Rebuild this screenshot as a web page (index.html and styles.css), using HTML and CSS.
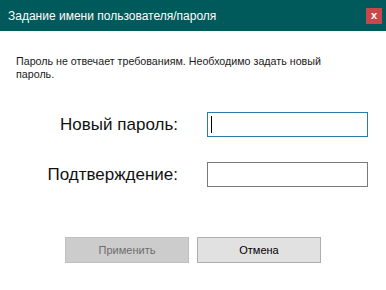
FILE: index.html
```html
<!DOCTYPE html>
<html lang="ru">
<head>
<meta charset="utf-8">
<link rel="stylesheet" href="styles.css">
</head>
<body>
<div class="window">
  <div class="titlebar">
    <span class="title">Задание имени пользователя/пароля</span>
    <span class="close">x</span>
  </div>
  <div class="content">
    <p class="message">Пароль не отвечает требованиям. Необходимо задать новый пароль.</p>
    <div class="form">
      <label class="label">Новый пароль:</label>
      <div class="input focused"><span class="caret"></span></div>
      <label class="label">Подтверждение:</label>
      <div class="input"></div>
    </div>
    <div class="buttons">
      <div class="btn disabled">Применить</div>
      <div class="btn">Отмена</div>
    </div>
  </div>
</div>
</body>
</html>
```
FILE: styles.css
```css
html, body {
  margin: 0;
  padding: 0;
  background: #ffffff;
}
.window {
  width: 386px;
  height: 290px;
  background: #ffffff;
  display: flex;
  flex-direction: column;
}
.titlebar {
  height: 31px;
  background: #00595a;
  display: flex;
  align-items: center;
  justify-content: space-between;
  padding-left: 8px;
  padding-right: 4px;
  box-sizing: border-box;
}
.title {
  font-family: "Liberation Sans", sans-serif;
  font-size: 12px;
  color: #ffffff;
}
.close {
  width: 16px;
  height: 16px;
  background: #c8474b;
  color: #ffffff;
  font-family: "Liberation Sans", sans-serif;
  font-size: 11px;
  font-weight: bold;
  display: flex;
  align-items: center;
  justify-content: center;
  line-height: 1;
  padding-bottom: 1px;
  box-sizing: border-box;
}
.content {
  padding: 24px 16px 0 16px;
}
.message {
  margin: 0;
  width: 325px;
  font-family: "Liberation Sans", sans-serif;
  font-size: 10.7px;
  line-height: 13px;
  color: #1a1a1a;
}
.form {
  margin-top: 31px;
  display: grid;
  grid-template-columns: 162px 161px;
  column-gap: 29px;
  row-gap: 25px;
}
.label {
  font-family: "Liberation Sans", sans-serif;
  font-size: 17px;
  color: #111111;
  text-align: right;
  align-self: center;
  padding-top: 1px;
}
.input {
  height: 25px;
  box-sizing: border-box;
  border: 1px solid #7a7a7a;
  background: #ffffff;
  display: flex;
  align-items: center;
  padding-left: 3px;
}
.input.focused {
  border-color: #2f7aa6;
}
.caret {
  width: 1px;
  height: 17px;
  background: #000000;
}
.buttons {
  margin-top: 50px;
  display: flex;
  justify-content: center;
  gap: 8px;
}
.btn {
  width: 124px;
  height: 26px;
  box-sizing: border-box;
  border: 1px solid #adadad;
  background: #e1e1e1;
  font-family: "Liberation Sans", sans-serif;
  font-size: 11px;
  color: #000000;
  display: flex;
  align-items: center;
  justify-content: center;
}
.btn.disabled {
  background: #cccccc;
  border-color: #bfbfbf;
  color: #6d6d6d;
}
```
